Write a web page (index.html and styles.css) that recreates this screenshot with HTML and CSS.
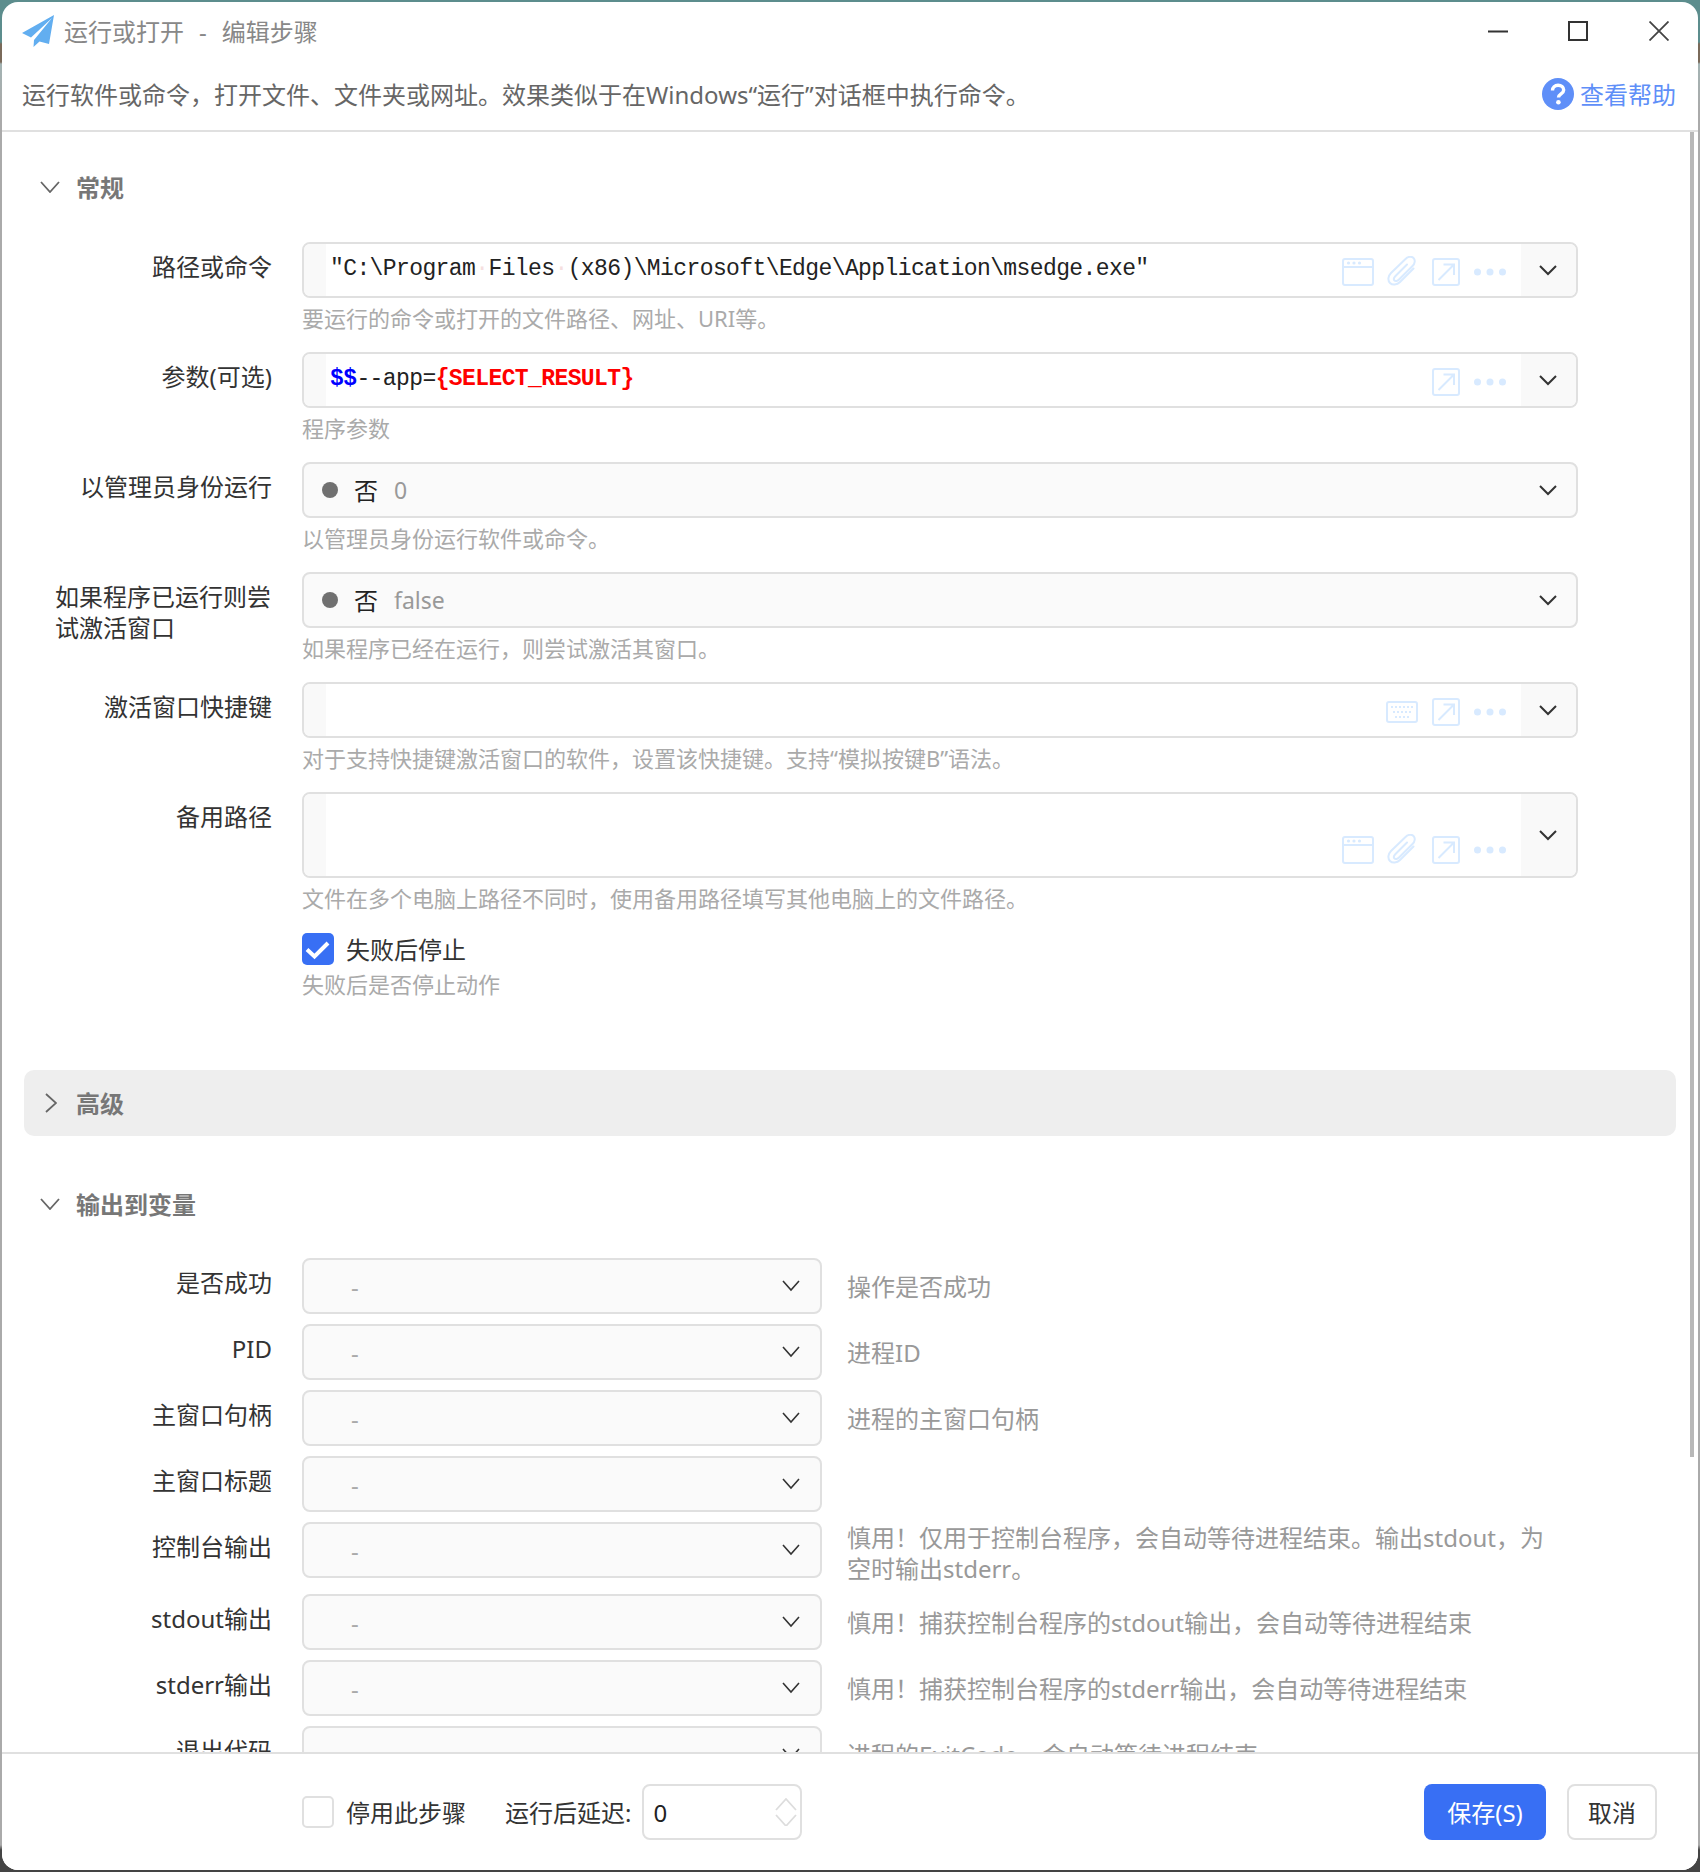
FILE: index.html
```html
<!DOCTYPE html>
<html lang="zh-CN">
<head>
<meta charset="utf-8">
<title>运行或打开 - 编辑步骤</title>
<link rel="stylesheet" href="styles.css">
</head>
<body>
<svg class="defs" width="0" height="0" aria-hidden="true">
  <defs>
    <symbol id="i-win" viewBox="0 0 32 32"><rect x="1" y="3" width="30" height="26" rx="2" fill="none" stroke="currentColor" stroke-width="2"/><path d="M1 11h30" fill="none" stroke="currentColor" stroke-width="2"/><circle cx="6.500" cy="7" r="1.600" fill="currentColor"/><circle cx="12" cy="7" r="1.600" fill="currentColor"/><circle cx="17.500" cy="7" r="1.600" fill="currentColor"/></symbol>
    <symbol id="i-clip" viewBox="0 0 32 32"><path d="M27.500 12.500 14 26c-3 3-7.500 3.500-10 1s-2-7 1-10L19.500 3c2.500-2.500 6-3 8-1s1.500 5.500-1 8L13 23.500c-1.500 1.500-3.500 2-4.500 1s-.5-3 1-4.500L21 8.500" fill="none" stroke="currentColor" stroke-width="2" stroke-linecap="round"/></symbol>
    <symbol id="i-ext" viewBox="0 0 32 32"><rect x="3" y="3" width="26" height="26" rx="2" fill="none" stroke="currentColor" stroke-width="2"/><path d="M8.500 24 24 8.500M13.500 8.500H24V19" fill="none" stroke="currentColor" stroke-width="2"/></symbol>
    <symbol id="i-dots" viewBox="0 0 32 32"><circle cx="3.500" cy="16" r="3.500" fill="currentColor"/><circle cx="16" cy="16" r="3.500" fill="currentColor"/><circle cx="28.500" cy="16" r="3.500" fill="currentColor"/></symbol>
    <symbol id="i-kbd" viewBox="0 0 32 32"><rect x="1" y="6" width="30" height="20" rx="2" fill="none" stroke="currentColor" stroke-width="2"/><path d="M5 11h22M7 16h18M9 21h14" fill="none" stroke="currentColor" stroke-width="2" stroke-dasharray="2 2"/></symbol>
    <symbol id="i-chev" viewBox="0 0 20 12"><path d="M2 2l8 8 8-8" fill="none" stroke="currentColor" stroke-width="2"/></symbol>
  </defs>
</svg>
<main class="window">
  <header class="titlebar">
    <svg class="logo" viewBox="0 0 32 32"><path d="M32 0 0 18l9 4.500L30 3 12 25l-.5 7 6-5.500L27 29z" fill="#62aef0"/></svg>
    <div class="title"><span>运行或打开</span><span class="sep">-</span><span>编辑步骤</span></div>
    <div class="winctl">
      <svg viewBox="0 0 20 20"><path d="M0 10.500h20" stroke="#333" stroke-width="2"/></svg>
      <svg viewBox="0 0 20 20"><rect x="1" y="1" width="18" height="18" fill="none" stroke="#333" stroke-width="2"/></svg>
      <svg viewBox="0 0 20 20"><path d="M.5.500l19 19M19.500.500l-19 19" stroke="#444" stroke-width="1.800"/></svg>
    </div>
  </header>
  <div class="descbar">
    <div class="desc">运行软件或命令，打开文件、文件夹或网址。效果类似于在Windows“运行”对话框中执行命令。</div>
    <a class="help">
      <svg viewBox="0 0 32 32"><circle cx="16" cy="16" r="16" fill="#5f8ff8"/><path d="M10.500 12.500c0-3.200 2.400-5.200 5.600-5.200s5.600 1.900 5.600 4.800c0 3.900-5.200 3.700-5.200 7.400" fill="none" stroke="#fff" stroke-width="3.400"/><circle cx="16.400" cy="24.200" r="2.300" fill="#fff"/></svg>
      <span>查看帮助</span>
    </a>
  </div>
  <div class="scroller">
    <div class="scrollthumb"></div>
    <section class="sec">
      <div class="sechead"><svg class="chev-h" viewBox="0 0 20 12"><path d="M1 1l9 10 9-10" fill="none" stroke="#666" stroke-width="1.800"/></svg><span>常规</span></div>
      <div class="row">
        <div class="lbl"><span>路径或命令</span></div>
        <div class="ctl">
          <div class="field">
            <div class="gutter"></div>
            <div class="code">"C:\Program<span class="ws">·</span>Files<span class="ws">·</span>(x86)\Microsoft\Edge\Application\msedge.exe"</div>
            <div class="tools"><svg><use href="#i-win"/></svg><svg><use href="#i-clip"/></svg><svg><use href="#i-ext"/></svg><svg><use href="#i-dots"/></svg></div>
            <div class="drop"><svg><use href="#i-chev"/></svg></div>
          </div>
          <div class="hint">要运行的命令或打开的文件路径、网址、URI等。</div>
        </div>
      </div>
      <div class="row">
        <div class="lbl"><span>参数(可选)</span></div>
        <div class="ctl">
          <div class="field">
            <div class="gutter"></div>
            <div class="code"><b class="blue">$$</b>--app=<b class="red">{SELECT_RESULT}</b></div>
            <div class="tools"><svg><use href="#i-ext"/></svg><svg><use href="#i-dots"/></svg></div>
            <div class="drop"><svg><use href="#i-chev"/></svg></div>
          </div>
          <div class="hint">程序参数</div>
        </div>
      </div>
      <div class="row">
        <div class="lbl"><span>以管理员身份运行</span></div>
        <div class="ctl">
          <div class="field pick">
            <i class="dot"></i><span class="opt">否</span><span class="val">0</span>
            <div class="drop plain"><svg><use href="#i-chev"/></svg></div>
          </div>
          <div class="hint">以管理员身份运行软件或命令。</div>
        </div>
      </div>
      <div class="row">
        <div class="lbl"><span>如果程序已运行则尝试激活窗口</span></div>
        <div class="ctl">
          <div class="field pick">
            <i class="dot"></i><span class="opt">否</span><span class="val">false</span>
            <div class="drop plain"><svg><use href="#i-chev"/></svg></div>
          </div>
          <div class="hint">如果程序已经在运行，则尝试激活其窗口。</div>
        </div>
      </div>
      <div class="row">
        <div class="lbl"><span>激活窗口快捷键</span></div>
        <div class="ctl">
          <div class="field">
            <div class="gutter"></div>
            <div class="code"></div>
            <div class="tools"><svg><use href="#i-kbd"/></svg><svg><use href="#i-ext"/></svg><svg><use href="#i-dots"/></svg></div>
            <div class="drop"><svg><use href="#i-chev"/></svg></div>
          </div>
          <div class="hint">对于支持快捷键激活窗口的软件，设置该快捷键。支持“模拟按键B”语法。</div>
        </div>
      </div>
      <div class="row tight">
        <div class="lbl"><span>备用路径</span></div>
        <div class="ctl">
          <div class="field tall">
            <div class="gutter"></div>
            <div class="code"></div>
            <div class="tools"><svg><use href="#i-win"/></svg><svg><use href="#i-clip"/></svg><svg><use href="#i-ext"/></svg><svg><use href="#i-dots"/></svg></div>
            <div class="drop"><svg><use href="#i-chev"/></svg></div>
          </div>
          <div class="hint">文件在多个电脑上路径不同时，使用备用路径填写其他电脑上的文件路径。</div>
        </div>
      </div>
      <div class="row last">
        <div class="lbl"></div>
        <div class="ctl">
          <label class="check"><span class="box on"><svg viewBox="0 0 32 32"><path d="M5 16.500l7.500 7L26 10" fill="none" stroke="#fff" stroke-width="4"/></svg></span><span>失败后停止</span></label>
          <div class="hint h2">失败后是否停止动作</div>
        </div>
      </div>
    </section>
    <div class="sechead closed"><svg class="chev-r" viewBox="0 0 12 20"><path d="M1 1l10 9-10 9" fill="none" stroke="#666" stroke-width="1.800"/></svg><span>高级</span></div>
    <section class="sec out">
      <div class="sechead"><svg class="chev-h" viewBox="0 0 20 12"><path d="M1 1l9 10 9-10" fill="none" stroke="#666" stroke-width="1.800"/></svg><span>输出到变量</span></div>
      <div class="orow"><div class="lbl"><span>是否成功</span></div><div class="sel"><span>-</span><svg viewBox="0 0 18 12"><path d="M1 1l8 9 8-9" fill="none" stroke="#333" stroke-width="1.600"/></svg></div><div class="note">操作是否成功</div></div>
      <div class="orow"><div class="lbl"><span>PID</span></div><div class="sel"><span>-</span><svg viewBox="0 0 18 12"><path d="M1 1l8 9 8-9" fill="none" stroke="#333" stroke-width="1.600"/></svg></div><div class="note">进程ID</div></div>
      <div class="orow"><div class="lbl"><span>主窗口句柄</span></div><div class="sel"><span>-</span><svg viewBox="0 0 18 12"><path d="M1 1l8 9 8-9" fill="none" stroke="#333" stroke-width="1.600"/></svg></div><div class="note">进程的主窗口句柄</div></div>
      <div class="orow"><div class="lbl"><span>主窗口标题</span></div><div class="sel"><span>-</span><svg viewBox="0 0 18 12"><path d="M1 1l8 9 8-9" fill="none" stroke="#333" stroke-width="1.600"/></svg></div><div class="note"></div></div>
      <div class="orow"><div class="lbl"><span>控制台输出</span></div><div class="sel"><span>-</span><svg viewBox="0 0 18 12"><path d="M1 1l8 9 8-9" fill="none" stroke="#333" stroke-width="1.600"/></svg></div><div class="note">慎用！仅用于控制台程序，会自动等待进程结束。输出stdout，为空时输出stderr。</div></div>
      <div class="orow"><div class="lbl"><span>stdout输出</span></div><div class="sel"><span>-</span><svg viewBox="0 0 18 12"><path d="M1 1l8 9 8-9" fill="none" stroke="#333" stroke-width="1.600"/></svg></div><div class="note">慎用！捕获控制台程序的stdout输出，会自动等待进程结束</div></div>
      <div class="orow"><div class="lbl"><span>stderr输出</span></div><div class="sel"><span>-</span><svg viewBox="0 0 18 12"><path d="M1 1l8 9 8-9" fill="none" stroke="#333" stroke-width="1.600"/></svg></div><div class="note">慎用！捕获控制台程序的stderr输出，会自动等待进程结束</div></div>
      <div class="orow"><div class="lbl"><span>退出代码</span></div><div class="sel"><span>-</span><svg viewBox="0 0 18 12"><path d="M1 1l8 9 8-9" fill="none" stroke="#333" stroke-width="1.600"/></svg></div><div class="note">进程的ExitCode，会自动等待进程结束</div></div>
    </section>
  </div>
  <footer class="footer">
    <label class="check"><span class="box"></span><span>停用此步骤</span></label>
    <span class="delay">运行后延迟:</span>
    <div class="num"><span>0</span><svg viewBox="0 0 22 28"><path d="M1 12 11 1l10 11M1 17l10 11 10-11" fill="none" stroke="#ddd" stroke-width="1.800"/></svg></div>
    <button class="btn primary">保存(S)</button>
    <button class="btn">取消</button>
  </footer>
</main>
</body>
</html>
```
FILE: styles.css
```css
* { box-sizing: border-box; }
html, body { margin: 0; padding: 0; }
body {
  width: 1700px;
  height: 1872px;
  overflow: hidden;
  padding: 2px 2px 2px 2px;
  font-family: "Noto Sans", "Noto Sans CJK SC", sans-serif;
  font-size: 24px;
  line-height: 31px;
  color: #333;
  background: linear-gradient(to bottom, #5c8d8d 0, #5c8d8d 42px, #7a6a5a 44px, #7a6a5a 62px, #a3b3b3 64px, #aaa 110px, #aaa 1845px, #444 1850px);
}
.defs { position: absolute; }
.window {
  width: 1696px;
  height: 1868px;
  background: #fff;
  border-radius: 16px;
  display: flex;
  flex-direction: column;
  overflow: hidden;
}
.titlebar {
  height: 60px;
  flex: none;
  display: flex;
  align-items: center;
  padding: 0 29px 2px 20px;
}
.logo { width: 32px; height: 32px; flex: none; }
.title { margin-left: 10px; color: #888; display: flex; }
.sep { margin: 0 15px 0 15px; }
.winctl { margin-left: auto; display: flex; gap: 60px; }
.winctl svg { width: 20px; height: 20px; display: block; }
.winctl svg:last-child { margin-left: 1px; }
.descbar {
  height: 70px;
  flex: none;
  display: flex;
  align-items: center;
  justify-content: space-between;
  padding: 0 22px 4px 20px;
  border-bottom: 2px solid #e0e0e0;
  color: #666;
}
.help { display: flex; align-items: center; gap: 6px; color: #5f8ff8; }
.help svg { width: 32px; height: 32px; display: block; }
.scroller {
  flex: 1;
  min-height: 0;
  overflow: hidden;
  position: relative;
  padding: 22px 22px 0;
}
.scrollthumb {
  position: absolute;
  top: 0;
  right: 4px;
  width: 4px;
  height: 1325px;
  background: #b8b8b8;
}
.sechead {
  height: 66px;
  display: flex;
  align-items: center;
  padding-left: 16px;
  gap: 16px;
  font-weight: 700;
  color: #777;
  margin-bottom: 22px;
}
.out .sechead { margin-bottom: 21px; }
.chev-h { width: 20px; height: 12px; }
.chev-r { width: 12px; height: 20px; }
.sechead.closed {
  background: #eee;
  border-radius: 10px;
  margin-bottom: 35px;
  padding-left: 21px;
  gap: 19px;
}
.row { display: flex; gap: 30px; margin-bottom: 18px; }
.row.tight { margin-bottom: 19px; }
.row.last { margin-bottom: 70px; }
.lbl {
  width: 248px;
  flex: none;
  display: flex;
  justify-content: flex-end;
  padding-top: 9px;
}
.lbl span { max-width: 217px; display: block; }
.ctl { width: 1276px; }
.field {
  height: 56px;
  display: flex;
  border: 2px solid #e0e0e0;
  border-radius: 8px;
  overflow: hidden;
}
.field.tall { height: 86px; }
.field.tall .tools { padding-bottom: 10px; }
.gutter { width: 22px; flex: none; background: #f9f9f9; }
.code {
  flex: 1;
  min-width: 0;
  padding: 7px 0 0 4px;
  font-family: "Liberation Mono", monospace;
  font-size: 23px;
  letter-spacing: -0.6px;
  line-height: 36px;
  white-space: nowrap;
  color: #222;
}
.ws { color: #f6dfdf; }
.blue { color: #00f; }
.red { color: #f00; }
.tools {
  flex: none;
  align-self: flex-end;
  display: flex;
  gap: 12px;
  padding: 0 15px 8px 0;
  color: #d8eaff;
}
.tools svg { width: 32px; height: 32px; display: block; }
.drop {
  width: 55px;
  flex: none;
  background: #f9f9f9;
  display: flex;
  align-items: center;
  justify-content: center;
  color: #333;
  padding-right: 2px;
}
.drop svg { width: 20px; height: 12px; display: block; }
.drop.plain { background: transparent; margin-left: auto; }
.pick { background: #fafafa; align-items: stretch; }
.dot {
  width: 16px;
  height: 16px;
  border-radius: 50%;
  background: #707070;
  align-self: center;
  margin-left: 18px;
}
.opt { align-self: center; margin-left: 16px; color: #222; }
.val { align-self: center; margin-left: 16px; color: #999; font-size: 23px; }
.hint {
  margin-top: 5px;
  font-size: 22px;
  color: #aaa;
  height: 31px;
}
.hint.h2 { margin-top: 4px; }
.check { display: flex; align-items: center; gap: 12px; color: #333; }
.box {
  width: 32px;
  height: 32px;
  flex: none;
  border: 2px solid #e0e0e0;
  border-radius: 5px;
  background: #fff;
}
.box.on { background: #386ff4; border: 0; }
.box svg { width: 32px; height: 32px; display: block; }
.orow { display: flex; margin-bottom: 10px; min-height: 56px; }
.out .lbl { padding-top: 9px; margin-right: 30px; }
.sel {
  width: 520px;
  height: 56px;
  flex: none;
  display: flex;
  align-items: center;
  justify-content: space-between;
  padding: 0 20px 0 47px;
  background: #fafafa;
  border: 2px solid #e0e0e0;
  border-radius: 8px;
  color: #aaa;
}
.sel svg { width: 18px; height: 12px; display: block; }
.note {
  width: 712px;
  margin-left: 25px;
  align-self: center;
  color: #999;
}
.footer {
  height: 118px;
  flex: none;
  display: flex;
  align-items: center;
  padding: 0 41px 0 300px;
  border-top: 2px solid #e0e0e0;
  background: #fff;
  position: relative;
}
.delay { margin-left: 39px; }
.num {
  width: 160px;
  height: 56px;
  margin-left: 11px;
  border: 2px solid #e0e0e0;
  border-radius: 8px;
  display: flex;
  align-items: center;
  justify-content: space-between;
  padding: 0 3px 0 9px;
  color: #222;
}
.num svg { width: 22px; height: 28px; display: block; }
.btn {
  height: 56px;
  width: 90px;
  margin-left: 21px;
  border: 2px solid #e0e0e0;
  border-radius: 8px;
  background: #fff;
  color: #333;
  font: inherit;
  padding: 0;
}
.btn.primary {
  width: 122px;
  margin-left: auto;
  background: #386ff4;
  border: 0;
  color: #fff;
}
```
